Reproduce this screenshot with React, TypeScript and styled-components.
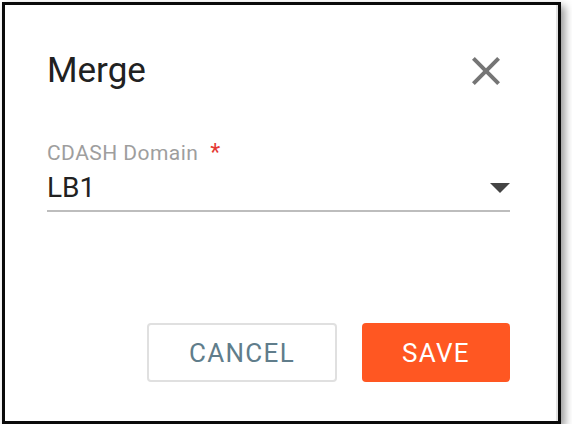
import React from "react";
import styled, { createGlobalStyle } from "styled-components";

const Global = createGlobalStyle`
  html, body { margin: 0; padding: 0; background: #ffffff; }
  body { font-family: Roboto, "Liberation Sans", Arial, sans-serif; }
  * { box-sizing: border-box; }
`;

const Frame = styled.div`
  margin: 2px 0 0 2px;
  width: 559px;
  height: 422px;
  border: 3px solid #0a0a0a;
  background: #fff;
  box-shadow: 4px 4px 8px rgba(0, 0, 0, 0.4), inset -2px 0 0 #e2e2e2;
  padding: 45px 48px 0 42px;
  display: flex;
  flex-direction: column;
`;

const Header = styled.div`
  display: flex;
  align-items: center;
  justify-content: space-between;
  height: 42px;
`;

const Title = styled.h2`
  margin: 0;
  font-family: Roboto, "Liberation Sans", sans-serif;
  font-weight: 400;
  font-size: 35px;
  line-height: 42px;
  color: #212121;
`;

const CloseButton = styled.button`
  border: none;
  background: transparent;
  padding: 0;
  width: 48px;
  height: 48px;
  display: flex;
  align-items: center;
  justify-content: center;
  cursor: pointer;
  margin: -3px 0;
`;

const Field = styled.div`
  margin-top: 48px;
  display: flex;
  flex-direction: column;
`;

const Label = styled.label`
  font-size: 21px;
  line-height: 25px;
  color: #9e9e9e;
  letter-spacing: 0.45px;
`;

const Star = styled.span`
  color: #e53935;
  margin-left: 12px;
  font-size: 23px;
`;

const SelectRow = styled.div`
  margin-top: 5px;
  display: flex;
  align-items: center;
  justify-content: space-between;
  padding-bottom: 5px;
  border-bottom: 2px solid #bdbdbd;
`;

const Value = styled.span`
  font-size: 28px;
  line-height: 34px;
  color: #212121;
`;

const Footer = styled.div`
  margin-top: 111px;
  display: flex;
  justify-content: flex-end;
  gap: 25px;
`;

const Button = styled.button<{ $primary?: boolean }>`
  height: 59px;
  width: ${(p) => (p.$primary ? "148px" : "190px")};
  border-radius: 4px;
  border: ${(p) => (p.$primary ? "none" : "2px solid #e0e0e0")};
  background: ${(p) => (p.$primary ? "#ff5722" : "#ffffff")};
  color: ${(p) => (p.$primary ? "#ffffff" : "#607d8b")};
  font-family: Roboto, "Liberation Sans", sans-serif;
  font-weight: 400;
  font-size: 26px;
  letter-spacing: 1.3px;
  text-transform: uppercase;
  cursor: pointer;
  padding: 0;
`;

export default function App() {
  return (
    <>
      <Global />
      <Frame>
        <Header>
          <Title>Merge</Title>
          <CloseButton aria-label="close">
            <svg width="48" height="48" viewBox="0 0 24 24">
              <path
                fill="#757575"
                d="M19 6.41 17.59 5 12 10.59 6.41 5 5 6.41 10.59 12 5 17.59 6.41 19 12 13.41 17.59 19 19 17.59 13.41 12z"
              />
            </svg>
          </CloseButton>
        </Header>
        <Field>
          <Label>
            CDASH Domain<Star>*</Star>
          </Label>
          <SelectRow>
            <Value>LB1</Value>
            <svg width="20" height="10" viewBox="0 0 20 10">
              <path d="M0 0 L20 0 L10 10 Z" fill="#444" />
            </svg>
          </SelectRow>
        </Field>
        <Footer>
          <Button>Cancel</Button>
          <Button $primary>Save</Button>
        </Footer>
      </Frame>
    </>
  );
}
